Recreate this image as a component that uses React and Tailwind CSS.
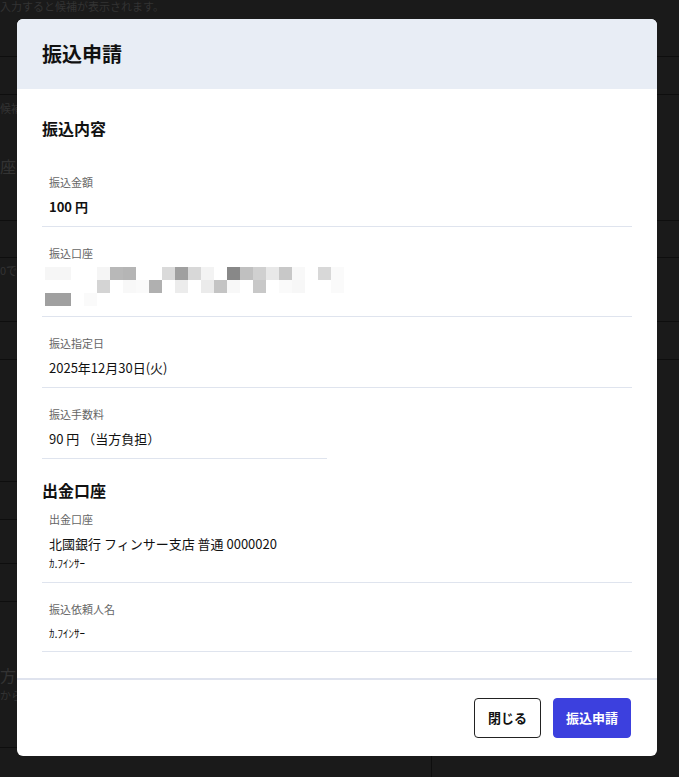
const mosaic = [
  [[0, '#f6f6f6'], [1, '#f6f6f6'], [4, '#f5f5f5'], [5, '#b8b8b8'], [6, '#b5b5b5'], [9, '#dadada'], [10, '#a0a0a0'], [11, '#d8d8d8'], [12, '#f3f3f3'], [14, '#888888'], [15, '#c0c0c0'], [16, '#d0d0d0'], [17, '#e8e8e8'], [18, '#c8c8c8'], [19, '#f8f8f8'], [21, '#d8d8d8'], [22, '#fafafa']],
  [[4, '#d4d4d4'], [6, '#f8f8f8'], [7, '#fafafa'], [8, '#b0b0b0'], [10, '#ececec'], [12, '#ebebeb'], [13, '#c4c4c4'], [14, '#f8f8f8'], [16, '#c8c8c8'], [18, '#fafafa'], [19, '#f7f7f7'], [22, '#fafafa']],
  [[0, '#a0a0a0'], [1, '#a0a0a0'], [3, '#fafafa']],
]

function Mosaic() {
  return (
    <svg width="299" height="39" viewBox="0 0 299 39" className="-ml-[4px] mt-[6px] block">
      {mosaic.map((cells, row) =>
        cells.map(([col, fill]) => (
          <rect key={`${row}-${col}`} x={col * 13} y={row * 13} width="13" height="13" fill={fill} />
        ))
      )}
    </svg>
  )
}

function Field({ label, children, className = '' }) {
  return (
    <div className={`border-b border-[#dfe4ee] px-[7px] pb-[9px] ${className}`}>
      <p className="text-[11px] leading-4 text-[#666]">{label}</p>
      <div className="mt-[7px] text-[13px] leading-5 text-[#111]">{children}</div>
    </div>
  )
}

// dimmed page behind the dialog
function Backdrop() {
  return (
    <div className="text-[#333]">
      <div className="h-[57px] border-b border-[#0e0e0e]">
        <p className="text-[11px] leading-[12px]">入力すると候補が表示されます。</p>
      </div>
      <div className="h-[38px] border-b border-[#0e0e0e]" />
      <div className="h-[126px] border-b border-[#0e0e0e]">
        <p className="pt-[5px] text-[11px] leading-4">候補</p>
        <p className="mt-[38px] text-[16px] leading-6">座</p>
      </div>
      <div className="h-[37px] border-b border-[#0e0e0e]" />
      <div className="h-[64px] border-b border-[#0e0e0e]">
        <p className="pt-[4px] text-[11px] leading-4">0で</p>
      </div>
      <div className="h-[38px] border-b border-[#0e0e0e]" />
      <div className="grid grid-cols-[432px_1fr]">
        <div>
          <div className="h-[122px] border-b border-[#0e0e0e]" />
          <div className="h-[38px] border-b border-[#0e0e0e]" />
          <div className="h-[44px] border-b border-[#0e0e0e]" />
          <div className="h-[38px] border-b border-[#0e0e0e]" />
          <div className="h-[146px] border-b border-[#0e0e0e]">
            <p className="pt-[61px] text-[16px] leading-6">方</p>
            <p className="text-[11px] leading-4">から</p>
          </div>
          <div className="h-[40px] border-r border-[#0e0e0e]" />
        </div>
        <div />
      </div>
    </div>
  )
}

export default function App() {
  return (
    <div className="relative h-[777px] overflow-hidden bg-[#1a1a1a] font-['Noto_Sans_CJK_JP','Noto_Sans',sans-serif]">
      <Backdrop />

      <div className="absolute inset-0 pl-[17px] pt-[19px]">
        <div className="flex w-[640px] flex-col overflow-hidden rounded-md bg-white">
          <div className="flex h-[70px] items-center bg-[#e8edf5] px-[25px]">
            <h1 className="text-[20px] font-bold leading-7 text-[#111]">振込申請</h1>
          </div>

          <div className="px-[25px] pb-[26px] pt-[27px]">
            <h2 className="mb-4 text-[16px] font-bold leading-6 text-[#111]">振込内容</h2>
            <Field label="振込金額" className="pt-[18px]">
              <span className="font-bold">100 円</span>
            </Field>
            <div className="border-b border-[#dfe4ee] px-[7px] pb-[10px] pt-[18px]">
              <p className="text-[11px] leading-4 text-[#666]">振込口座</p>
              <Mosaic />
            </div>
            <Field label="振込指定日" className="pt-[18px]">
              2025年12月30日(火)
            </Field>
            <Field label="振込手数料" className="w-[285px] pt-[18px]">
              90 円 （当方負担）
            </Field>

            <h2 className="mt-[19px] text-[16px] font-bold leading-6 text-[#111]">出金口座</h2>
            <div className="border-b border-[#dfe4ee] px-[7px] pb-[10px] pt-[9px]">
              <p className="text-[11px] leading-4 text-[#666]">出金口座</p>
              <p className="mt-[7px] text-[13px] leading-5 text-[#111]">北國銀行 フィンサー支店 普通 0000020</p>
              <p className="text-[11px] leading-[18px] text-[#111]">ｶ.ﾌｲﾝｻｰ</p>
            </div>
            <div className="border-b border-[#dfe4ee] px-[7px] pb-[9px] pt-[18px]">
              <p className="text-[11px] leading-4 text-[#666]">振込依頼人名</p>
              <p className="mt-[7px] text-[11px] leading-[18px] text-[#111]">ｶ.ﾌｲﾝｻｰ</p>
            </div>
          </div>

          <div className="flex justify-end gap-3 border-t-2 border-[#dfe3ee] px-[26px] py-[18px]">
            <button
              type="button"
              className="h-10 rounded-[4px] border border-[#222] bg-white px-[13px] text-[13px] font-bold text-[#111]"
            >
              閉じる
            </button>
            <button
              type="button"
              className="h-10 rounded-[4px] border border-[#3c40de] bg-[#3c40de] px-3 text-[13px] font-bold text-white"
            >
              振込申請
            </button>
          </div>
        </div>
      </div>
    </div>
  )
}
